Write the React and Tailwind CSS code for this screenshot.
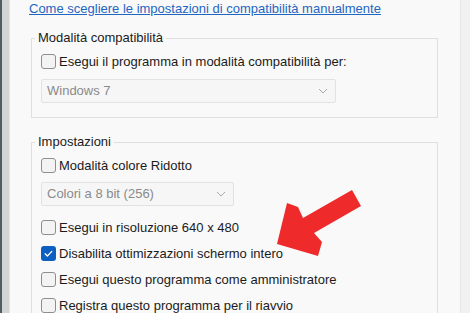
import React from "react";

function Chevron() {
  return (
    <svg width="10" height="6" viewBox="0 0 10 6" className="shrink-0">
      <path d="M1 1l4 4 4-4" fill="none" stroke="#a8a8a8" strokeWidth="1" />
    </svg>
  );
}

function Check({ checked, label }) {
  return (
    <div className="flex items-center h-[15px] gap-[3px]">
      {checked ? (
        <span className="w-[15px] h-[15px] rounded-[3px] bg-[#0b5fc1] flex items-center justify-center shrink-0">
          <svg width="11" height="11" viewBox="0 0 11 11">
            <path d="M2.2 5.8l2.2 2.2 4.4-4.6" fill="none" stroke="#ffffff" strokeWidth="1.3" strokeLinecap="round" strokeLinejoin="round" />
          </svg>
        </span>
      ) : (
        <span className="w-[15px] h-[15px] rounded-[3px] border border-[#8e8e8e] bg-[#f3f3f3] shrink-0" />
      )}
      <span className="text-[13px] leading-[15px] text-[#1b1b1b] whitespace-nowrap">{label}</span>
    </div>
  );
}

function Select({ width, text, className }) {
  return (
    <div
      className={
        "h-[24px] border border-[#e2e2e2] bg-[#f6f6f6] rounded-[2px] flex items-center justify-between pl-[5px] pr-[7px] text-[13px] text-[#8a8a8a] " +
        className
      }
      style={{ width }}
    >
      <span>{text}</span>
      <Chevron />
    </div>
  );
}

export default function App() {
  return (
    <div className="relative w-[470px] h-[313px] overflow-hidden flex font-['Liberation_Sans',Arial,sans-serif] bg-[#f9f9f9]">
      {/* left edge */}
      <div className="flex shrink-0">
        <div className="w-[2px] bg-[#4e5d60]" />
        <div className="w-[7px] bg-[#d3d5d5]" />
        <div className="w-[1px] bg-[#e6e6e6]" />
      </div>

      {/* main */}
      <div className="w-[450px] shrink-0 bg-[#f9f9f9] pl-[19px]">
        <div className="text-[13px] leading-[17px] underline text-[#1f66c0] whitespace-nowrap">
          Come scegliere le impostazioni di compatibilità manualmente
        </div>

        <fieldset className="mt-[13px] ml-[2px] w-[407px] border border-[#dfdfdf] pl-[9px] pb-[14px]">
          <legend className="-ml-[6px] px-[3px] text-[13px] leading-[16px] text-[#1b1b1b]">
            Modalità compatibilità
          </legend>
          <div className="mt-[8px]">
            <Check label="Esegui il programma in modalità compatibilità per:" />
          </div>
          <Select width={295} text="Windows 7" className="mt-[10px]" />
        </fieldset>

        <fieldset className="mt-[16px] ml-[2px] w-[407px] border border-[#dfdfdf] pl-[9px] pb-[20px]">
          <legend className="-ml-[6px] px-[3px] text-[13px] leading-[16px] text-[#1b1b1b]">
            Impostazioni
          </legend>
          <div className="mt-[8px]">
            <Check label="Modalità colore Ridotto" />
          </div>
          <Select width={193} text="Colori a 8 bit (256)" className="mt-[9px]" />
          <div className="mt-[14px] flex flex-col gap-[11px]">
            <Check label="Esegui in risoluzione 640 x 480" />
            <Check checked label="Disabilita ottimizzazioni schermo intero" />
            <Check label="Esegui questo programma come amministratore" />
            <Check label="Registra questo programma per il riavvio" />
          </div>
        </fieldset>
      </div>

      {/* right edge */}
      <div className="flex-1 bg-[#f1f1f1] border-l border-[#e6e6e6]" />

      {/* red arrow overlay */}
      <svg
        className="absolute left-0 top-0 pointer-events-none"
        width="470"
        height="313"
        viewBox="0 0 470 313"
      >
        <polygon
          points="277,244 287,203 298,207 303,218 352,190 361,206 314,233 322,242 318,256"
          fill="#ee2a2a"
        />
      </svg>
    </div>
  );
}
